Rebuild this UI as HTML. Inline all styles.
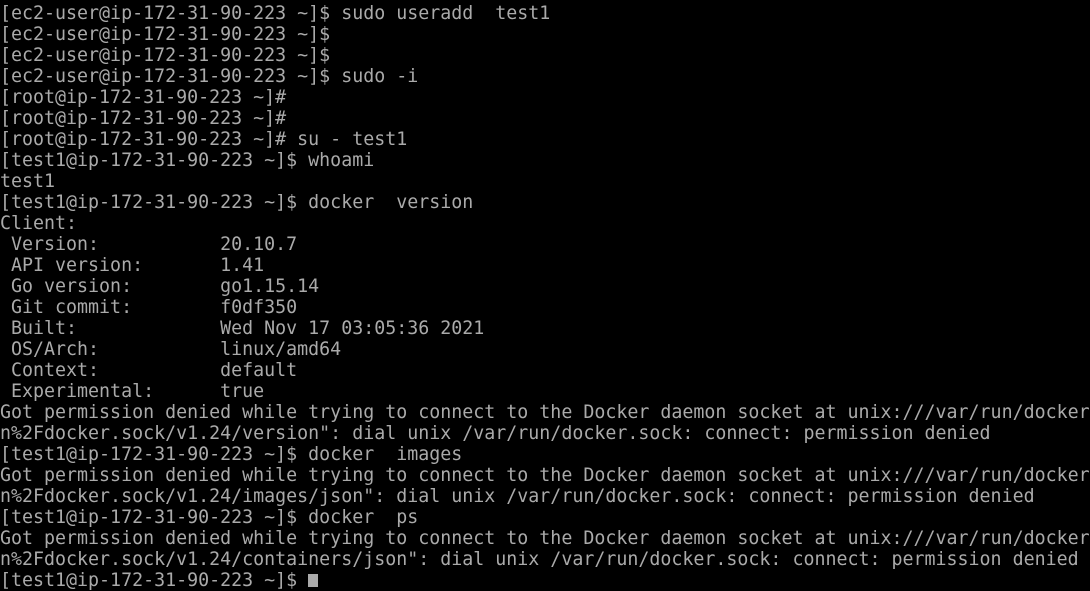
<!DOCTYPE html>
<html><head><style>
html,body{margin:0;padding:0;background:#000;width:1090px;height:582px;overflow:hidden}
pre{margin:0;position:absolute;left:0;top:3px;font-family:"DejaVu Sans Mono","Liberation Mono",monospace;font-size:18.3px;line-height:21px;color:#aaaaaa;white-space:pre}
.c{display:inline-block;width:10px;height:13px;background:#aaa;vertical-align:-1px}
</style></head><body><pre>[ec2-user@ip-172-31-90-223 ~]$ sudo useradd  test1
[ec2-user@ip-172-31-90-223 ~]$
[ec2-user@ip-172-31-90-223 ~]$
[ec2-user@ip-172-31-90-223 ~]$ sudo -i
[root@ip-172-31-90-223 ~]#
[root@ip-172-31-90-223 ~]#
[root@ip-172-31-90-223 ~]# su - test1
[test1@ip-172-31-90-223 ~]$ whoami
test1
[test1@ip-172-31-90-223 ~]$ docker  version
Client:
 Version:           20.10.7
 API version:       1.41
 Go version:        go1.15.14
 Git commit:        f0df350
 Built:             Wed Nov 17 03:05:36 2021
 OS/Arch:           linux/amd64
 Context:           default
 Experimental:      true
Got permission denied while trying to connect to the Docker daemon socket at unix:///var/run/docker
n%2Fdocker.sock/v1.24/version": dial unix /var/run/docker.sock: connect: permission denied
[test1@ip-172-31-90-223 ~]$ docker  images
Got permission denied while trying to connect to the Docker daemon socket at unix:///var/run/docker
n%2Fdocker.sock/v1.24/images/json": dial unix /var/run/docker.sock: connect: permission denied
[test1@ip-172-31-90-223 ~]$ docker  ps
Got permission denied while trying to connect to the Docker daemon socket at unix:///var/run/docker
n%2Fdocker.sock/v1.24/containers/json": dial unix /var/run/docker.sock: connect: permission denied
[test1@ip-172-31-90-223 ~]$ <span class="c"></span></pre></body></html>
